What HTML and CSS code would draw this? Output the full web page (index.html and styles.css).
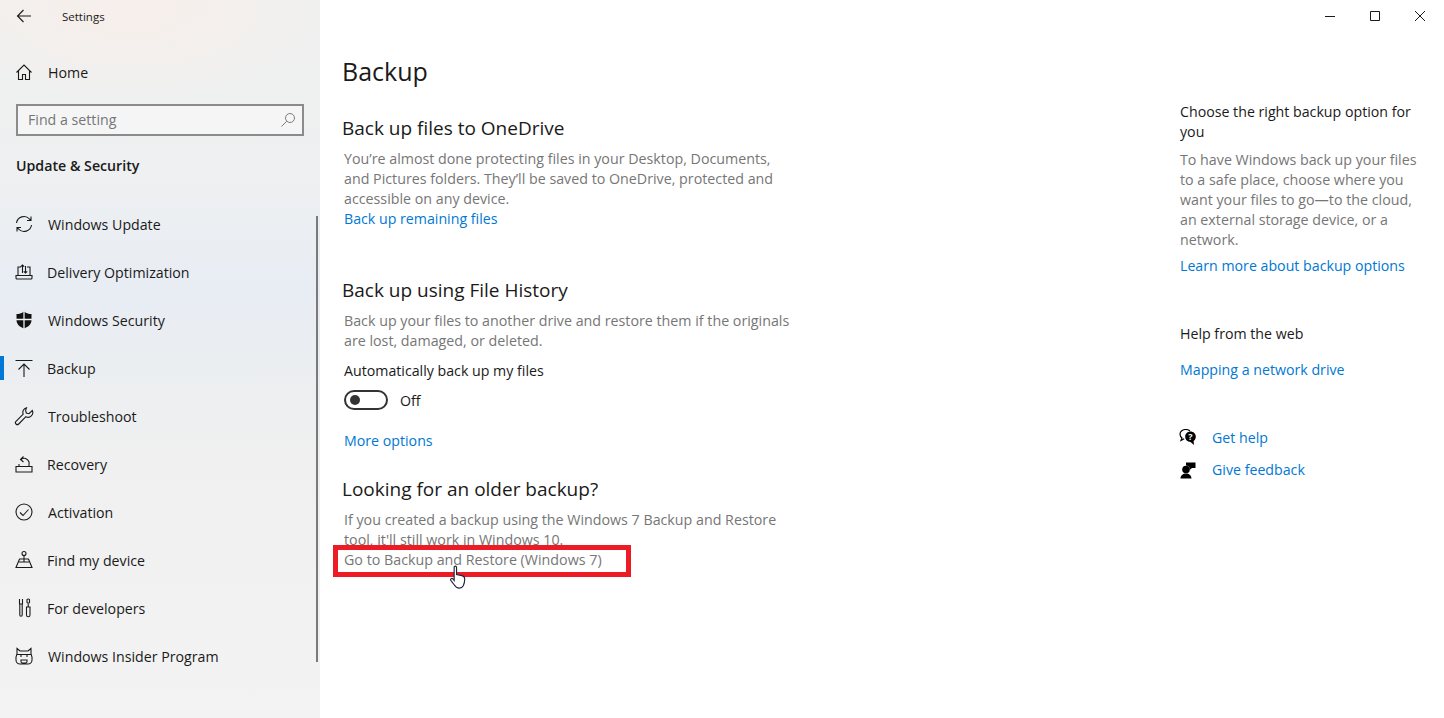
FILE: index.html

```html
<!DOCTYPE html>
<html lang="en">

<head>
    <meta charset="UTF-8">
    <title>Settings</title>
    <link rel="stylesheet" href="styles.css">
</head>

<body>
    <div class="app">
        <div class="side">
            <div class="side-top">
                <svg class="back" viewBox="0 0 16 16"><path d="M15 8H1.5M7.5 2 1.5 8l6 6"/></svg>
                <span class="side-title">Settings</span>
            </div>
            <div class="row home">
                <svg class="ico" viewBox="0 0 20 20"><path d="M2.5 10.5 10 3l7.500 7.500M4.500 9v8.500h4v-5h3v5h4V9"/></svg>
                <span>Home</span>
            </div>
            <div class="search">
                <span>Find a setting</span>
                <svg class="search-ico" viewBox="0 0 16 16"><circle cx="10" cy="6" r="4.500"/><path d="M6.800 9.200 1.500 14.500"/></svg>
            </div>
            <div class="side-head">Update &amp; Security</div>
            <ul class="menu">
                <li class="row">
                    <svg class="ico" viewBox="0 0 20 20"><path d="M2.500 9a7.500 7.500 0 0 1 13-4l1.500 1.500M17 2.500v4h-4M17.500 11a7.500 7.500 0 0 1-13 4L3 13.500M3 17.500v-4h4"/></svg>
                    <span>Windows Update</span>
                </li>
                <li class="row tight">
                    <svg class="ico" viewBox="0 0 20 20"><path d="M4 13V5h3M13 5h3v8M2 13.500h16v2.500a1 1 0 0 1-1 1H3a1 1 0 0 1-1-1zM8.500 11V3M6.800 4.700 8.500 3l1.700 1.700M11.500 4v7M9.800 9.300l1.700 1.700 1.700-1.700"/></svg>
                    <span>Delivery Optimization</span>
                </li>
                <li class="row">
                    <svg class="ico" viewBox="0 0 20 20"><path class="fill" d="M10 1.500c2.500 1.800 5 2.600 7.500 2.600V10c0 4-3 7-7.500 8.500C5.500 17 2.500 14 2.500 10V4.100C5 4.100 7.500 3.300 10 1.500z"/><path class="cut" d="M10 1v18M2 9.500h16"/></svg>
                    <span>Windows Security</span>
                </li>
                <li class="row tight active">
                    <svg class="ico" viewBox="0 0 20 20"><path d="M1.500 2.500h17M10 19V6M4.500 11.500 10 6l5.500 5.500"/></svg>
                    <span>Backup</span>
                </li>
                <li class="row">
                    <svg class="ico" viewBox="0 0 20 20"><path d="M12.500 1.800a4.700 4.700 0 0 0-3.300 6.400L2 15.300a1.900 1.900 0 0 0 2.700 2.700l7.200-7.300a4.700 4.700 0 0 0 6.400-6.200L15 7.700l-2.700-.7-.7-2.700z"/></svg>
                    <span>Troubleshoot</span>
                </li>
                <li class="row tight">
                    <svg class="ico" viewBox="0 0 20 20"><path d="M2 12.500h16V18H2zM5 12.500V10M15 12.500v-2A5 5 0 0 0 7 5.500M9.500 8 6.500 5.500 9.500 2.500"/></svg>
                    <span>Recovery</span>
                </li>
                <li class="row">
                    <svg class="ico" viewBox="0 0 20 20"><circle cx="10" cy="10" r="8"/><path d="m6 10.500 3 3 5.500-6"/></svg>
                    <span>Activation</span>
                </li>
                <li class="row tight">
                    <svg class="ico" viewBox="0 0 20 20"><circle cx="10" cy="3.500" r="2"/><path d="M10 5.500V12M5.500 9h9l3.500 8.500H2zM5 12h10"/></svg>
                    <span>Find my device</span>
                </li>
                <li class="row tight">
                    <svg class="ico" viewBox="0 0 20 20"><path d="M5.500 1v5M8.500 1v5M5 6h4M5.800 6v11a1.200 1.200 0 0 0 2.400 0V6M13 1.500a1.700 1.700 0 0 1 2.500 0v3a1.500 1.500 0 0 1-2.500 0zM14.200 6v3M12.500 9h3.500v8a1.700 1.700 0 0 1-3.500 0z"/></svg>
                    <span>For developers</span>
                </li>
                <li class="row">
                    <svg class="ico" viewBox="0 0 20 20"><path d="M3 2.500 6 5h8l3-2.500V8l1 3v3a4 4 0 0 1-4 4H6a4 4 0 0 1-4-4v-3l1-3zM3 8.500h14M7 8.500v2.500M13 8.500v2.500M7 14h6v1.500a1.500 1.500 0 0 1-1.500 1.500h-3A1.500 1.500 0 0 1 7 15.500z"/></svg>
                    <span>Windows Insider Program</span>
                </li>
            </ul>
            <div class="scroll"></div>
        </div>

        <div class="main">
            <div class="con">
                <h1>Backup</h1>

                <h2 class="first">Back up files to OneDrive</h2>
                <p class="grey">You’re almost done protecting files in your Desktop, Documents,<br>and Pictures folders. They’ll be saved to OneDrive, protected and<br>accessible on any device.</p>
                <a class="link">Back up remaining files</a>

                <h2>Back up using File History</h2>
                <p class="grey">Back up your files to another drive and restore them if the originals<br>are lost, damaged, or deleted.</p>
                <p class="label">Automatically back up my files</p>
                <div class="toggle">
                    <span class="track"><i></i></span>
                    <span class="state">Off</span>
                </div>
                <a class="link more">More options</a>

                <h2 class="older">Looking for an older backup?</h2>
                <p class="grey">If you created a backup using the Windows 7 Backup and Restore<br>tool, it'll still work in Windows 10.</p>
                <a class="grey-link">Go to Backup and Restore (Windows 7)</a>
            </div>

            <div class="aside">
                <p>Choose the right backup option for<br>you</p>
                <p class="grey desc">To have Windows back up your files<br>to a safe place, choose where you<br>want your files to go—to the cloud,<br>an external storage device, or a<br>network.</p>
                <a class="link learn">Learn more about backup options</a>
                <p class="web">Help from the web</p>
                <a class="link map">Mapping a network drive</a>
                <div class="help first-help">
                    <svg viewBox="0 0 18 18"><path class="line" d="M11 2C9.800 1 8.300.5 6.800.5 3.600.5 1 2.500 1 5.200c0 1.500.8 2.800 2 3.700L2 11.500l3.200-1.700"/><path class="solid" d="M11.500 2.500c-3 0-5.300 2.200-5.300 5.200s2.300 5.200 5.300 5.200l3.500 3-.4-3.900c1.300-1 2.200-2.500 2.200-4.300 0-3-2.300-5.200-5.300-5.200z"/><text x="11.500" y="11" class="mark">?</text></svg>
                    <a class="link">Get help</a>
                </div>
                <div class="help">
                    <svg viewBox="0 0 18 18"><circle class="solid" cx="7" cy="8.500" r="3.800"/><path class="solid" d="M1.500 17.500c0-3 2.500-5 5.500-5s5.500 2 5.500 5zM7 1.500h9.500V7H13l-2.500 2V6.500A5 5 0 0 0 7 4.500z"/></svg>
                    <a class="link">Give feedback</a>
                </div>
            </div>

            <div class="win">
                <svg viewBox="0 0 12 12"><path d="M1 6.500h10"/></svg>
                <svg viewBox="0 0 12 12"><path d="M1.500 1.500h9v9h-9z"/></svg>
                <svg viewBox="0 0 12 12"><path d="m1 1 10 10M11 1 1 11"/></svg>
            </div>
        </div>
    </div>

    <div class="mark-box"></div>
    <svg class="cursor" viewBox="0 0 18 26"><path d="M5 2.500c0-1.700 2.500-1.700 2.500 0V10l5.500 1c2 .4 3 1.500 3 3.500 0 3-.5 5-1.500 7-.8 1.500-2 2.500-4 2.500-2.500 0-4-1-5.500-3.500L1.500 16c-.8-1.500 1-2.800 2.200-1.600L5 16z"/></svg>
</body>

</html>
```

FILE: styles.css

```css
* {
    margin: 0;
    padding: 0;
    box-sizing: border-box;
    list-style: none;
}

html,
body {
    height: 100%;
    overflow: hidden;
}

body {
    font-family: "Open Sans", "Noto Sans", sans-serif;
    font-size: 14.200px;
    line-height: 20px;
    color: #1a1a1a;
    background: #fff;
}

.app {
    display: flex;
    height: 718px;
}

/* left menu */
.side {
    width: 320px;
    flex: none;
    position: relative;
    background:
        radial-gradient(ellipse 190px 90px at 130px 10px, rgba(250, 238, 232, .7), transparent),
        linear-gradient(180deg, #f0f0ef 0, #eef0f1 180px, #e8edf4 290px, #ebeef1 360px, #f0f0f0 460px, #f3f3f3 718px);
}

.side-top {
    height: 32px;
    display: flex;
    align-items: center;
}

.back {
    width: 16px;
    height: 16px;
    margin-left: 16px;
    fill: none;
    stroke: #1a1a1a;
    stroke-width: 1.100;
}

.side-title {
    font-size: 11.500px;
    margin: 1px 0 0 30px;
}

.row {
    height: 48px;
    display: flex;
    align-items: center;
    padding-left: 14px;
    gap: 14px;
    position: relative;
}

.row span {
    margin-top: 1px;
}

.row.tight {
    gap: 13px;
}

.home {
    margin-top: 16px;
}

.ico {
    width: 20px;
    height: 20px;
    flex: none;
    fill: none;
    stroke: #1a1a1a;
    stroke-width: 1.100;
}

.ico .fill {
    fill: #111;
    stroke: none;
}

.ico .cut {
    stroke: #edf0f4;
    stroke-width: 1.300;
}

.search {
    width: 288px;
    height: 32px;
    margin: 8px 0 0 16px;
    border: 2px solid #8b8b8b;
    background: rgba(250, 250, 250, .55);
    display: flex;
    align-items: center;
    justify-content: space-between;
    padding: 0 6px 0 10px;
    color: #767676;
}

.search-ico {
    width: 16px;
    height: 16px;
    fill: none;
    stroke: #7c7c7c;
    stroke-width: 1;
}

.side-head {
    margin: 20px 0 0 16px;
    font-weight: 600;
    line-height: 20px;
}

.menu {
    margin-top: 24px;
}

.active::before {
    content: "";
    position: absolute;
    left: 0;
    top: 12px;
    width: 4px;
    height: 24px;
    background: #0078d7;
}

.scroll {
    position: absolute;
    left: 316px;
    top: 216px;
    width: 2px;
    height: 446px;
    background: #7a7a7a;
}

/* content */
.main {
    flex: 1;
    display: flex;
    position: relative;
}

.con {
    width: 860px;
    padding: 51px 0 0 24px;
}

h1 {
    font-size: 25px;
    font-weight: 400;
    line-height: 40px;
    margin-left: -2px;
}

h2 {
    font-size: 19px;
    font-weight: 400;
    line-height: 28px;
    margin: 47px 0 7px -2px;
}

h2.first {
    margin-top: 23px;
}

h2.older {
    margin-top: 24px;
}

.grey,
.grey-link {
    color: #767676;
    white-space: nowrap;
    font-size: 14.250px;
}

.grey-link {
    font-size: 14.280px;
}

.link {
    display: block;
    color: #0078d4;
}

.label {
    margin-top: 10px;
}

.toggle {
    display: flex;
    align-items: center;
    gap: 12px;
    margin-top: 9px;
}

.state {
    line-height: 16px;
    margin-top: 2px;
}

.track {
    width: 44px;
    height: 20px;
    border: 2px solid #333;
    border-radius: 10px;
    display: flex;
    align-items: center;
    padding-left: 4px;
}

.track i {
    width: 10px;
    height: 10px;
    border-radius: 50%;
    background: #333;
}

.more {
    margin-top: 21px;
}

.aside {
    padding-top: 102px;
    width: 264px;
    white-space: nowrap;
}

.desc {
    margin-top: 8px;
}

.learn {
    margin-top: 6px;
}

.web {
    margin-top: 48px;
}

.map {
    margin-top: 16px;
}

.help {
    display: flex;
    align-items: center;
    gap: 15px;
    margin-top: 12px;
}

.first-help {
    margin-top: 48px;
}

.help svg {
    width: 18px;
    height: 18px;
    margin-left: -1px;
    flex: none;
}

.help .solid {
    fill: #000;
}

.help .line {
    fill: none;
    stroke: #000;
    stroke-width: 1.200;
}

.help .mark {
    fill: #fff;
    font-size: 9px;
    font-weight: 700;
    text-anchor: middle;
}

.win {
    position: absolute;
    top: 10px;
    right: 18px;
    display: flex;
    gap: 33px;
}

.win svg {
    width: 12px;
    height: 12px;
    fill: none;
    stroke: #1a1a1a;
    stroke-width: 1;
}

/* red marker and hand cursor on top of the shot */
.mark-box {
    position: absolute;
    left: 333px;
    top: 545px;
    width: 298px;
    height: 32px;
    border: 5px solid #ed1c24;
}

.cursor {
    position: absolute;
    left: 449px;
    top: 565px;
    width: 18px;
    height: 25px;
    fill: #fff;
    stroke: #1c2540;
    stroke-width: 1.200;
}
```
